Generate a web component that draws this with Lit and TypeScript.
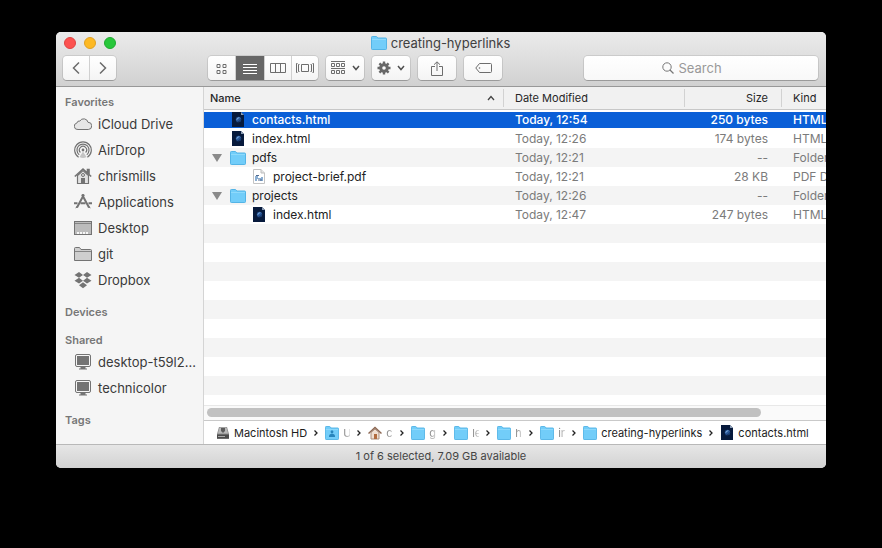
import { LitElement, html, css, svg, nothing } from "lit";
import { customElement } from "lit/decorators.js";
import { classMap } from "lit/directives/class-map.js";

const icon = (w: number, h: number, body: unknown) =>
  html`<svg width=${w} height=${h} viewBox="0 0 ${w} ${h}" fill="none" aria-hidden="true">${body}</svg>`;

const folder = (w = 16, mark: unknown = nothing) => html`<svg width=${w} height="14" viewBox="0 0 16 14" preserveAspectRatio="none" fill="none" aria-hidden="true">
  <path d="M.5 1.3Q.5.5 1.3.5H5.2Q5.8.5 6.2 1.1L6.8 2H14.7Q15.5 2 15.5 2.8V12.7Q15.5 13.5 14.7 13.5H1.3Q.5 13.5.5 12.7Z" fill="#72cdf9" stroke="#54b4e6"/>
  <path d="M1 3.5H15" stroke="#8edafc"/>${mark}</svg>`;

const page = () => icon(12, 15, svg`
  <path d="M0 0H9L12 3V15H0Z" fill="#071a3c"/>
  <path d="M9 0L12 3H9Z" fill="#8d9fb8"/>
  <circle cx="6.500" cy="7.500" r="2.700" fill="#2a5797"/>
  <path d="M4 10.500Q8.500 11 9.300 6.500Q8 9 4 10.500Z" fill="#12305e"/>
  <path d="M4.800 7.800Q5.200 5.800 7.300 5.700" stroke="#83b2e2"/>`);

const pdf = () => icon(12, 15, svg`
  <path d="M.5.5H8L11.500 4V14.500H.5Z" fill="#fff" stroke="#c4c4c4"/>
  <path d="M8 .5V4H11.500" fill="#e4e4e4" stroke="#bdbdbd"/>
  <path d="M2 7H5V9H8V8H10V12H7V10H4V12H2Z" fill="#8baed2"/>
  <path d="M3 6.500H6M5 11H9" stroke="#526b90"/>`);

const grey = "#737373";
const monitor = () => icon(18, 18, svg`
  <rect x="1.500" y="1.500" width="15" height="12" rx="1.500" fill="#f5f5f5" stroke="${grey}"/>
  <rect x="3" y="3" width="12" height="9" fill="${grey}"/>
  <path d="M6.500 14H11.500V15.500H13V16.500H5V15.500H6.500Z" fill="${grey}"/>`);

const side = {
  cloud: () => icon(18, 18, svg`<path d="M4 14.500A3.300 3.300 0 0 1 2.900 8A2.600 2.600 0 0 1 5.900 6A4.400 4.400 0 0 1 14 7.300A3.600 3.600 0 0 1 14.300 14.500Z" fill="#e6e6e6" stroke="${grey}"/>`),
  airdrop: () => icon(18, 18, svg`<g stroke="${grey}" stroke-width="1.200">
    <path d="M4.600 16.200A8.300 8.300 0 1 1 13.400 16.200"/><path d="M5.200 13.700A6 6 0 1 1 12.800 13.700"/><path d="M6.400 11.500A3.600 3.600 0 1 1 11.600 11.500"/></g>
    <circle cx="9" cy="9" r="1.400" fill="${grey}"/><path d="M9 10.500L12.500 16Q9 18 5.500 16Z" fill="#c4c4c4"/>`),
  home: () => icon(18, 18, svg`<path d="M3.500 8.500V16.500H14.500V8.500L9 3.500Z" fill="#e2e2e2" stroke="${grey}" stroke-width="1.200"/>
    <path d="M.8 9.500L9 2L17.200 9.500M13.500 6V2.500H15V7" stroke="${grey}" stroke-width="1.600"/>
    <circle cx="9" cy="8" r="1.500" stroke="${grey}"/><path d="M7 11H11V16.500H7Z" fill="${grey}"/>`),
  apps: () => icon(18, 18, svg`<path d="M10 1.500L3 14.500M8 1.500L15 14.500" stroke="${grey}" stroke-width="2"/>
    <path d="M0 10.200H3.500M6.500 10.200H11.500M14.500 10.200H18" stroke="${grey}" stroke-width="2"/>
    <path d="M1.300 15.500L2.300 13.200L4 14.200ZM16.700 15.500L15.700 13.200L14 14.200Z" fill="${grey}"/>`),
  desktop: () => icon(18, 18, svg`<rect x=".5" y="2.500" width="17" height="13" fill="#bcbcbc" stroke="${grey}"/>
    <path d="M1 4.500H17" stroke="#858585"/><path d="M3 14H15" stroke="#f7f7f7" stroke-width="2" stroke-dasharray="2 1"/>`),
  folder: () => icon(18, 18, svg`<path d="M.5 15.500V3.500Q.5 2.500 1.500 2.500H5.500L7 4.500H16.500Q17.500 4.500 17.500 5.500V15.500Z" fill="#cecece" stroke="${grey}"/><path d="M1 6.500H17" stroke="#858585"/>`),
  dropbox: () => icon(18, 18, svg`<path d="M5 1L9 3.900L5 6.800L.5 3.900ZM13 1L17.500 3.900L13 6.800L9 3.900ZM5 6.800L9 9.700L5 12.600L.5 9.700ZM13 6.800L17.500 9.700L13 12.600L9 9.700ZM9 11.200L13 14.300L9 17.200L5 14.300Z" fill="${grey}"/>
    <path d="M9 4.700L12 6.800L9 8.900L6 6.800Z" fill="#f5f5f5"/>`),
  monitor,
};

const groups: { title: string; items: [keyof typeof side, string][] }[] = [
  { title: "Favorites", items: [["cloud", "iCloud Drive"], ["airdrop", "AirDrop"], ["home", "chrismills"], ["apps", "Applications"], ["desktop", "Desktop"], ["folder", "git"], ["dropbox", "Dropbox"]] },
  { title: "Devices", items: [] },
  { title: "Shared", items: [["monitor", "desktop-t59l2..."], ["monitor", "technicolor"]] },
  { title: "Tags", items: [] },
];

interface Entry { name: string; type: "page" | "folder" | "pdf"; date: string; size: string; kind: string; nested?: boolean; selected?: boolean }
const entries: Entry[] = [
  { name: "contacts.html", type: "page", date: "Today, 12:54", size: "250 bytes", kind: "HTML", selected: true },
  { name: "index.html", type: "page", date: "Today, 12:26", size: "174 bytes", kind: "HTML" },
  { name: "pdfs", type: "folder", date: "Today, 12:21", size: "--", kind: "Folder" },
  { name: "project-brief.pdf", type: "pdf", date: "Today, 12:21", size: "28 KB", kind: "PDF D", nested: true },
  { name: "projects", type: "folder", date: "Today, 12:26", size: "--", kind: "Folder" },
  { name: "index.html", type: "page", date: "Today, 12:47", size: "247 bytes", kind: "HTML", nested: true },
];

const drive = () => icon(14, 14, svg`<path d="M3 1H11L13 8V13H1V8Z" fill="#8b8b8b"/><path d="M3.500 1.500H10.500L12 7.500H2Z" fill="#b9b9b9"/><path d="M5 2H9V5L7 7L5 5Z" fill="#5c5c5c"/><path d="M1 8.500H13V12.500H1Z" fill="#4b4b4b"/><path d="M2 10.500H9" stroke="#aaa"/>`);
const house = () => icon(14, 14, svg`<path d="M3 6.500V13H11V6.500L7 3Z" fill="#f0dfd1" stroke="#aa8f7d"/><path d="M.5 7.500L7 1.500L13.500 7.500" stroke="#8c6752" stroke-width="1.500"/><path d="M6 8H9V13H6Z" fill="#b26c3e"/>`);
const person = svg`<circle cx="8" cy="5.800" r="1.600" fill="#2785bd"/><path d="M4.500 11Q4.500 7.800 8 7.800T11.500 11Z" fill="#2785bd"/>`;

const crumbs: { label: string; art: () => unknown; short?: boolean }[] = [
  { label: "Macintosh HD", art: drive },
  { label: "U", art: () => folder(14, person), short: true },
  { label: "c", art: house, short: true },
  { label: "g", art: () => folder(14), short: true },
  { label: "le", art: () => folder(14), short: true },
  { label: "h", art: () => folder(14), short: true },
  { label: "in", art: () => folder(14), short: true },
  { label: "creating-hyperlinks", art: () => folder(14) },
  { label: "contacts.html", art: page },
];

const shared = css`
  * { box-sizing: border-box; }
  svg { display: block; flex: none; }
  button { font: inherit; color: inherit; margin: 0; padding: 0; border: 0; background: none; }
  ul, ol { list-style: none; margin: 0; padding: 0; }
`;

@customElement("finder-toolbar")
class FinderToolbar extends LitElement {
  static styles = [shared, css`
    :host { display: block; padding: 0 8px 6px 7px; background: linear-gradient(#ebebeb, #d1d1d1); border-bottom: 1px solid #989898; }
    .title-row { display: grid; grid-template-columns: 1fr auto 1fr; align-items: center; height: 24px; padding-bottom: 2px; }
    .lights { display: flex; gap: 8px; padding-left: 1px; }
    .light { width: 12px; height: 12px; border-radius: 50%; border: 1px solid; }
    .close { background: #fc5250; border-color: #df4442; }
    .minimise { background: #fdb924; border-color: #dfa023; }
    .zoom { background: #28c73b; border-color: #20aa30; }
    h1 { display: flex; align-items: center; gap: 4px; margin: 0; font-size: 13px; font-weight: 400; color: #404040; }
    .tools { display: flex; height: 24px; gap: 8px; }
    .group { display: flex; border-radius: 4px; background: linear-gradient(#fff, #f4f4f4); box-shadow: 0 0 0 1px #00000018, 0 1px 0 #00000030; }
    .group button { display: flex; align-items: center; justify-content: center; gap: 6px; width: 38px; }
    .nav { margin-right: 84px; }
    .nav button { width: 26px; }
    .nav button + button { width: 27px; }
    .views button { width: 27px; }
    .views .current { width: 29px; background: #666; }
    button + button { border-left: 1px solid #d0d0d0; }
    .search { display: flex; flex: 0 1 234px; align-items: center; justify-content: center; gap: 5px; margin-left: auto; border-radius: 4px; background: linear-gradient(#fff, #f8f8f8); box-shadow: 0 0 0 1px #00000018, 0 1px 0 #00000030; }
    input { width: 62px; padding: 0; border: 0; outline: 0; background: none; font: inherit; font-size: 13px; }
    input::placeholder { color: #999; opacity: 1; }
  `];
  render() {
    const chevron = icon(8, 6, svg`<path d="M1 1L4 4.500L7 1" stroke="#505050" stroke-width="1.500"/>`);
    const cog = [0, 45, 90, 135].map((a) => svg`<path d="M7 .5V13.500" stroke="#686868" stroke-width="2.400" transform="rotate(${a} 7 7)"/>`);
    return html`
      <div class="title-row">
        <div class="lights">
          <button class="light close" aria-label="Close"></button>
          <button class="light minimise" aria-label="Minimise"></button>
          <button class="light zoom" aria-label="Zoom"></button>
        </div>
        <h1>${folder()}creating-hyperlinks</h1>
      </div>
      <div class="tools">
        <div class="group nav">
          <button aria-label="Back">${icon(8, 14, svg`<path d="M7 1.500L1.500 7L7 12.500" stroke="#6b6b6b" stroke-width="1.500"/>`)}</button>
          <button aria-label="Forward">${icon(8, 14, svg`<path d="M1 1.500L6.500 7L1 12.500" stroke="#6b6b6b" stroke-width="1.500"/>`)}</button>
        </div>
        <div class="group views">
          <button aria-label="Icons">${icon(11, 11, svg`<path d="M1 1.500H4V4.500H1ZM7 1.500H10V4.500H7ZM1 7.500H4V10.500H1ZM7 7.500H10V10.500H7Z" stroke="#6d6d6d"/>`)}</button>
          <button class="current" aria-label="List" aria-pressed="true">${icon(14, 11, svg`<path d="M0 1.500H14M0 4.500H14M0 7.500H14M0 10.500H14" stroke="#fff"/>`)}</button>
          <button aria-label="Columns">${icon(16, 10, svg`<path d="M.5.5H15.500V9.500H.5ZM5.500.5V9.500M10.500.5V9.500" stroke="#6d6d6d"/>`)}</button>
          <button aria-label="Cover Flow">${icon(18, 10, svg`<path d="M1.500.5H.5V9.500H1.500M3.500 1.500H2.500V8.500H3.500M5.500 1.500H12.500V8.500H5.500ZM14.500 1.500H15.500V8.500H14.500M16.500.5H17.500V9.500H16.500" stroke="#6d6d6d"/>`)}</button>
        </div>
        <div class="group"><button aria-label="Arrange">${icon(15, 14, svg`<path d="M0 .5H14M0 7.500H14M.5 2.500H3.500V5.500H.5ZM5.500 2.500H8.500V5.500H5.500ZM10.500 2.500H13.500V5.500H10.500ZM.5 9.500H3.500V12.500H.5ZM5.500 9.500H8.500V12.500H5.500ZM10.500 9.500H13.500V12.500H10.500Z" stroke="#6d6d6d"/>`)}${chevron}</button></div>
        <div class="group"><button aria-label="Actions">${icon(14, 14, svg`${cog}<circle cx="7" cy="7" r="3.600" stroke="#686868" stroke-width="2.400"/><circle cx="7" cy="7" r="1.800" fill="#fafafa"/>`)}${chevron}</button></div>
        <div class="group"><button aria-label="Share">${icon(12, 15, svg`<path d="M4 5.500H.5V14.500H11.500V5.500H8M6 10V1M3 3.700L6 .8L9 3.700" stroke="#6d6d6d"/>`)}</button></div>
        <div class="group"><button aria-label="Tags">${icon(17, 10, svg`<path d="M4.500.5H15.500Q16.500.5 16.500 1.500V8.500Q16.500 9.500 15.500 9.500H4.500L.8 5Z" stroke="#6d6d6d"/><circle cx="4.500" cy="5" r=".8" fill="#6d6d6d"/>`)}</button></div>
        <label class="search">
          ${icon(12, 12, svg`<circle cx="5" cy="5" r="4.200" stroke="#777"/><path d="M8 8L11.500 11.500" stroke="#777" stroke-width="1.200"/>`)}
          <input type="text" placeholder="Search" aria-label="Search">
        </label>
      </div>`;
  }
}

@customElement("finder-sidebar")
class FinderSidebar extends LitElement {
  static styles = [shared, css`
    :host { display: block; padding-top: 6px; background: #f5f5f5; color: #3a3a3a; }
    section { margin-bottom: 10px; }
    h2 { margin: 0; padding-left: 9px; font-size: 11px; line-height: 18px; font-weight: 600; color: #777; }
    a { display: flex; align-items: center; gap: 6px; height: 26px; padding-left: 18px; font-size: 13px; color: inherit; text-decoration: none; white-space: nowrap; }
  `];
  render() {
    return groups.map((g) => html`<section><h2>${g.title}</h2>
      ${g.items.length ? html`<ul>${g.items.map(([art, label]) => html`<li><a href="#">${side[art]()}${label}</a></li>`)}</ul>` : nothing}
    </section>`);
  }
}

@customElement("finder-list")
class FinderList extends LitElement {
  static styles = [shared, css`
    :host { display: flex; flex-direction: column; min-width: 0; border-left: 1px solid #d4d4d4; background: #fff; }
    .files { flex: 1; overflow: hidden; background: repeating-linear-gradient(#fff 0 19px, #f4f4f4 19px 38px) 0 4px; }
    table { width: calc(100% + 78px); table-layout: fixed; border-collapse: separate; border-spacing: 0; font-size: 12px; }
    .date-col { width: 181px; } .size-col { width: 97px; } .kind-col { width: 123px; }
    th { height: 23px; padding: 0; background: #f1f1f1; border-bottom: 1px solid #c8c8c8; font-size: 11px; font-weight: 400; text-align: left; color: #262626; }
    th button { display: flex; align-items: center; width: 100%; height: 18px; padding: 0 13px 0 11px; border-left: 1px solid #d2d2d2; }
    th:first-child button { justify-content: space-between; padding: 0 8px 0 6px; border: 0; font-weight: 500; }
    .size button { justify-content: flex-end; }
    td { height: 19px; padding: 0 13px 0 12px; line-height: 19px; color: #7b7b7b; white-space: nowrap; overflow: hidden; }
    td.size { text-align: right; }
    td:first-child { padding: 0 0 0 6px; color: #222; }
    .name { display: flex; align-items: center; height: 17px; }
    .toggle { width: 20px; height: 17px; display: flex; align-items: center; padding-left: 2px; }
    .nested { padding-left: 21px; }
    .art { display: flex; justify-content: center; width: 16px; margin-right: 6px; }
    .alt td { background: #f4f4f4; }
    .selected td { background: linear-gradient(#fff 0 2px, #0a5fd7 2px 18px, #fff 18px); color: #fff; font-weight: 500; }
    .selected td:first-child { color: #fff; }
    .track { height: 15px; padding: 2px 3px; border-top: 1px solid #e8e8e8; background: #fafafa; }
    .thumb { width: 90%; height: 9px; border-radius: 5px; background: #c1c1c1; }
    ol { display: flex; align-items: center; height: 24px; padding-left: 12px; border-top: 1px solid #c9c9c9; font-size: 11px; color: #1c1c1c; }
    li { display: flex; align-items: center; white-space: nowrap; }
    li a { display: flex; align-items: center; gap: 4px; color: inherit; text-decoration: none; }
    .crumb-art { display: flex; justify-content: center; width: 14px; }
    .label.short { width: 7px; overflow: hidden; color: #8d8d8d; mask-image: linear-gradient(90deg, #000 20%, #0005); }
    .sep { margin: 0 7px; }
  `];
  render() {
    return html`
      <div class="files">
        <table>
          <colgroup><col><col class="date-col"><col class="size-col"><col class="kind-col"></colgroup>
          <thead><tr>
            <th aria-sort="ascending"><button>Name${icon(8, 6, svg`<path d="M1 5L4 1.500L7 5" stroke="#444" stroke-width="1.300"/>`)}</button></th>
            <th><button>Date Modified</button></th>
            <th class="size"><button>Size</button></th>
            <th><button>Kind</button></th>
          </tr></thead>
          <tbody>${entries.map((e, i) => html`
            <tr class=${classMap({ alt: i % 2 === 0 && !e.selected, selected: !!e.selected })}>
              <td><div class=${classMap({ name: true, nested: !!e.nested })}>
                ${e.type === "folder"
                  ? html`<button class="toggle" aria-label="Collapse ${e.name}" aria-expanded="true">${icon(10, 8, svg`<path d="M0 0H10L5 8Z" fill="#8a8a8a"/>`)}</button>`
                  : html`<span class="toggle"></span>`}
                <span class="art">${e.type === "folder" ? folder() : e.type === "pdf" ? pdf() : page()}</span>${e.name}
              </div></td>
              <td>${e.date}</td><td class="size">${e.size}</td><td>${e.kind}</td>
            </tr>`)}</tbody>
        </table>
      </div>
      <div class="track"><div class="thumb"></div></div>
      <ol aria-label="Path">${crumbs.map((c, i) => html`<li>
        ${i ? html`<svg class="sep" width="4" height="8" viewBox="0 0 4 8" fill="none" aria-hidden="true"><path d="M.5 1.500L3 4L.5 6.500" stroke="#222" stroke-width="1.300"/></svg>` : nothing}
        <a href="#"><span class="crumb-art">${c.art()}</span><span class=${classMap({ label: true, short: !!c.short })}>${c.label}</span></a></li>`)}</ol>`;
  }
}

@customElement("app-root")
class AppRoot extends LitElement {
  static styles = [shared, css`
    :host { display: block; box-sizing: border-box; min-height: 100vh; padding: 32px 56px 80px; background: #000; font-family: Inter, "Liberation Sans", sans-serif; }
    main { border-radius: 5px; overflow: hidden; background: #f5f5f5; }
    .body { display: grid; grid-template-columns: 147px minmax(0, 1fr); min-height: 357px; }
    footer { height: 24px; border-top: 1px solid #b8b8b8; background: linear-gradient(#e6e6e6, #d2d2d2); font-size: 11px; line-height: 23px; text-align: center; color: #444; }
  `];
  render() {
    return html`<main>
      <finder-toolbar></finder-toolbar>
      <div class="body"><finder-sidebar></finder-sidebar><finder-list></finder-list></div>
      <footer>1 of 6 selected, 7.09 GB available</footer>
    </main>`;
  }
}
